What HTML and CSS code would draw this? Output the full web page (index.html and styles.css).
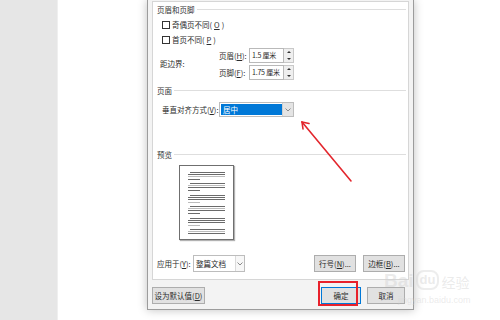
FILE: index.html
```html
<!DOCTYPE html>
<html>
  <head>
    <meta charset="UTF-8">
    <title>版式</title>
    <link rel="stylesheet" href="styles.css">
  </head>
  <body>
    <div class="app">
      <div class="nav"></div>
      <div class="doc"></div>
      <div class="dialog">
        <div class="panel">
          <div class="group-title t1"><span>页眉和页脚</span></div>
          <div class="check"><span class="box"></span>奇偶页不同(<u>O</u>)</div>
          <div class="check"><span class="box"></span>首页不同(<u>P</u>)</div>
          <div class="margins">
            <div class="margins-label">距边界:</div>
            <div class="margin-rows">
              <div class="margin-row">
                <label>页眉(<u>H</u>):</label>
                <div class="spin">
                  <div class="spin-value">1.5 厘米</div>
                  <div class="spin-btns"><span class="up"></span><span class="down"></span></div>
                </div>
              </div>
              <div class="margin-row">
                <label>页脚(<u>F</u>):</label>
                <div class="spin">
                  <div class="spin-value">1.75 厘米</div>
                  <div class="spin-btns"><span class="up"></span><span class="down"></span></div>
                </div>
              </div>
            </div>
          </div>
          <div class="group-title t2"><span>页面</span></div>
          <div class="valign">
            <label>垂直对齐方式(<u>V</u>):</label>
            <div class="select select-wide">
              <div class="select-value selected">居中</div>
              <div class="select-arrow">
                <svg width="6" height="4" viewBox="0 0 6 4"><polyline points="0.5,0.5 3,3 5.5,0.5" fill="none" stroke="#8a8a8a" stroke-width="1"/></svg>
              </div>
            </div>
          </div>
          <div class="group-title t3"><span>预览</span></div>
          <div class="preview">
            <svg width="53" height="73" viewBox="0 0 53 73">
              <g fill="#6b6b6b">
                <rect x="10" y="6" width="35" height="1"/>
                <rect x="8" y="8" width="37" height="1"/>
                <rect x="8" y="13" width="12" height="1"/>
                <rect x="10" y="17" width="35" height="1"/>
                <rect x="8" y="21" width="37" height="1"/>
                <rect x="8" y="24" width="12" height="1"/>
                <rect x="10" y="29" width="35" height="1"/>
                <rect x="8" y="31" width="37" height="1"/>
                <rect x="8" y="33" width="37" height="1"/>
                <rect x="10" y="40" width="35" height="1"/>
                <rect x="8" y="44" width="37" height="1"/>
                <rect x="8" y="47" width="12" height="1"/>
                <rect x="10" y="52" width="35" height="1"/>
                <rect x="8" y="54" width="37" height="1"/>
                <rect x="8" y="56" width="37" height="1"/>
                <rect x="10" y="63" width="35" height="1"/>
                <rect x="8" y="67" width="37" height="1"/>
              </g>
              <g fill="#bcbcbc">
                <rect x="8" y="10" width="37" height="1"/>
                <rect x="8" y="19" width="37" height="1"/>
                <rect x="8" y="36" width="12" height="1"/>
                <rect x="8" y="42" width="37" height="1"/>
                <rect x="8" y="59" width="12" height="1"/>
                <rect x="8" y="65" width="37" height="1"/>
              </g>
            </svg>
          </div>
          <div class="apply">
            <label>应用于(<u>Y</u>):</label>
            <div class="select select-small">
              <div class="select-value">整篇文档</div>
              <div class="select-arrow plain">
                <svg width="6" height="4" viewBox="0 0 6 4"><polyline points="0.5,0.5 3,3 5.5,0.5" fill="none" stroke="#8a8a8a" stroke-width="1"/></svg>
              </div>
            </div>
            <div class="apply-buttons">
              <button class="btn btn-side">行号(<u>N</u>)...</button>
              <button class="btn btn-side">边框(<u>B</u>)...</button>
            </div>
          </div>
        </div>
        <div class="footer">
          <button class="btn btn-default">设为默认值(<u>D</u>)</button>
          <button class="btn btn-ok">确定</button>
          <button class="btn btn-cancel">取消</button>
        </div>
      </div>
      <div class="doc-right"></div>
    </div>

    <!-- annotation overlays -->
    <svg class="arrow" width="500" height="320" viewBox="0 0 500 320">
      <g stroke="#e3262d" stroke-width="1.6" fill="none" stroke-linecap="round">
        <line x1="351" y1="181" x2="302" y2="122"/>
        <polyline points="309,123.5 302,122 303,129"/>
      </g>
    </svg>
    <div class="highlight"></div>
    <div class="watermark">
      <div class="wm-top"><span class="wm-bai">Bai</span><span class="wm-du">du</span><span class="wm-jy">经验</span></div>
      <div class="wm-url">jingyan.baidu.com</div>
    </div>
  </body>
</html>
```

FILE: styles.css
```css
* {
  box-sizing: border-box;
}
body {
  margin: 0;
  width: 500px;
  height: 320px;
  overflow: hidden;
  position: relative;
  background: #fff;
  font-family: "Noto Sans CJK SC", "Noto Sans", sans-serif;
  font-size: 7.5px;
  line-height: 1;
  color: #2b2b2b;
  white-space: nowrap;
}
u {
  text-decoration: underline;
  text-underline-offset: 1px;
}
.app {
  display: flex;
  height: 320px;
}
.nav {
  width: 58px;
  background: #e6e6e6;
  border-right: 1px solid #efefef;
}
.doc {
  width: 89px;
  background: #fff;
}
.doc-right {
  flex: 1;
  background: #fff;
}
.dialog {
  position: relative;
  z-index: 1;
  width: 267px;
  height: 310px;
  display: flex;
  flex-direction: column;
  padding: 1px 4px 0;
  background: #f3f3f3;
  border: 1px solid #9c9c9c;
  border-top: none;
  box-shadow: 0 0 9px rgba(0, 0, 0, 0.25);
}
.panel {
  height: 279px;
  display: flex;
  flex-direction: column;
  background: #fff;
  border: 1px solid #d6d6d6;
}
.group-title {
  display: flex;
  align-items: center;
  gap: 2px;
  padding: 0 2px 0 4px;
  color: #333;
}
.group-title::after {
  content: "";
  flex: 1;
  height: 1px;
  background: #dedede;
}
.t1 {
  height: 15px;
}
.t2 {
  height: 19px;
}
.t3 {
  height: 15px;
  margin-top: 30px;
}
.check {
  height: 15px;
  display: flex;
  align-items: center;
  gap: 2px;
  padding-left: 9px;
}
.box {
  width: 8px;
  height: 8px;
  border: 1px solid #333;
  background: #fff;
}
.margins {
  height: 34px;
  display: flex;
  align-items: center;
  padding-left: 7px;
}
.margins-label {
  width: 59px;
}
.margin-rows {
  display: flex;
  flex-direction: column;
  gap: 2px;
}
.margin-row {
  height: 15px;
  display: flex;
  align-items: center;
}
.margin-row label {
  width: 30px;
}
.spin {
  width: 45px;
  height: 15px;
  display: flex;
}
.spin-value {
  flex: 1;
  display: flex;
  align-items: center;
  padding-left: 2px;
  overflow: hidden;
  font-size: 7px;
  letter-spacing: -0.2px;
  border: 1px solid #b9b9b9;
  background: #fff;
}
.spin-btns {
  width: 10px;
  display: flex;
  flex-direction: column;
  border: 1px solid #c9c9c9;
  border-left: none;
  background: #efefef;
}
.spin-btns span {
  flex: 1;
  display: flex;
  align-items: center;
  justify-content: center;
}
.up::before,
.down::before {
  content: "";
  border-left: 2px solid transparent;
  border-right: 2px solid transparent;
}
.up::before {
  border-bottom: 2px solid #333;
}
.down::before {
  border-top: 2px solid #333;
}
.valign {
  height: 15px;
  margin-top: 2px;
  display: flex;
  align-items: center;
  padding-left: 9px;
}
.valign label {
  width: 57px;
}
.select {
  height: 15px;
  display: flex;
  border: 1px solid #bdbdbd;
  background: #fff;
}
.select-wide {
  width: 75px;
  padding: 1px 0 1px 1px;
}
.select-small {
  width: 52px;
  height: 17px;
}
.select-value {
  flex: 1;
  display: flex;
  align-items: center;
  padding-left: 2px;
}
.selected {
  background: #0078d7;
  color: #fff;
}
.select-arrow {
  width: 11px;
  margin: -1px 0;
  display: flex;
  align-items: center;
  justify-content: center;
  background: #e4e4e4;
  border-left: 1px solid #cfcfcf;
}
.select-arrow.plain {
  width: 9px;
  margin: 0;
  background: #f7f7f7;
  border-left: 1px solid #dadada;
}
.preview {
  width: 55px;
  height: 75px;
  margin: 3px 0 0 26px;
  border: 1px solid #6f6f6f;
  background: #fff;
  box-shadow: 1px 1px 1px rgba(0, 0, 0, 0.3);
}
.preview svg {
  display: block;
}
.apply {
  height: 17px;
  margin-top: 15px;
  display: flex;
  align-items: center;
  padding: 0 3px 0 4px;
}
.apply label {
  width: 36px;
}
.apply-buttons {
  margin-left: auto;
  display: flex;
  gap: 7px;
}
.btn {
  height: 17px;
  padding: 0;
  display: flex;
  align-items: center;
  justify-content: center;
  font: inherit;
  color: #2b2b2b;
  background: #e1e1e1;
  border: 1px solid #adadad;
}
.btn-side {
  width: 42px;
}
.footer {
  height: 29px;
  display: flex;
  align-items: flex-start;
  padding-top: 7px;
}
.btn-default {
  width: 53px;
}
.btn-ok {
  width: 40px;
  margin-left: auto;
  border-color: #0078d7;
}
.btn-cancel {
  width: 38px;
  margin: 0 4px 0 6px;
}
.arrow {
  position: absolute;
  left: 0;
  top: 0;
  z-index: 2;
  pointer-events: none;
}
.highlight {
  position: absolute;
  left: 318px;
  top: 281px;
  width: 40px;
  height: 25px;
  z-index: 2;
  border: 2px solid #e8212b;
}
.watermark {
  position: absolute;
  left: 384px;
  top: 270px;
  z-index: 3;
  color: rgba(210, 210, 210, 0.45);
  font-family: "Liberation Sans", Arial, sans-serif;
  pointer-events: none;
}
.wm-top {
  display: flex;
  align-items: flex-end;
}
.wm-bai {
  font-size: 19px;
  font-weight: bold;
  line-height: 19px;
}
.wm-du {
  margin-left: 2px;
  font-size: 13px;
  font-weight: bold;
  line-height: 16px;
  padding: 0 2px;
  border: 2px solid rgba(210, 210, 210, 0.4);
  border-radius: 8px;
}
.wm-jy {
  margin-left: 2px;
  font-family: "Noto Sans CJK SC", sans-serif;
  font-size: 14px;
  line-height: 16px;
}
.wm-url {
  margin-top: 6px;
  padding-left: 14px;
  font-size: 9px;
}
```
